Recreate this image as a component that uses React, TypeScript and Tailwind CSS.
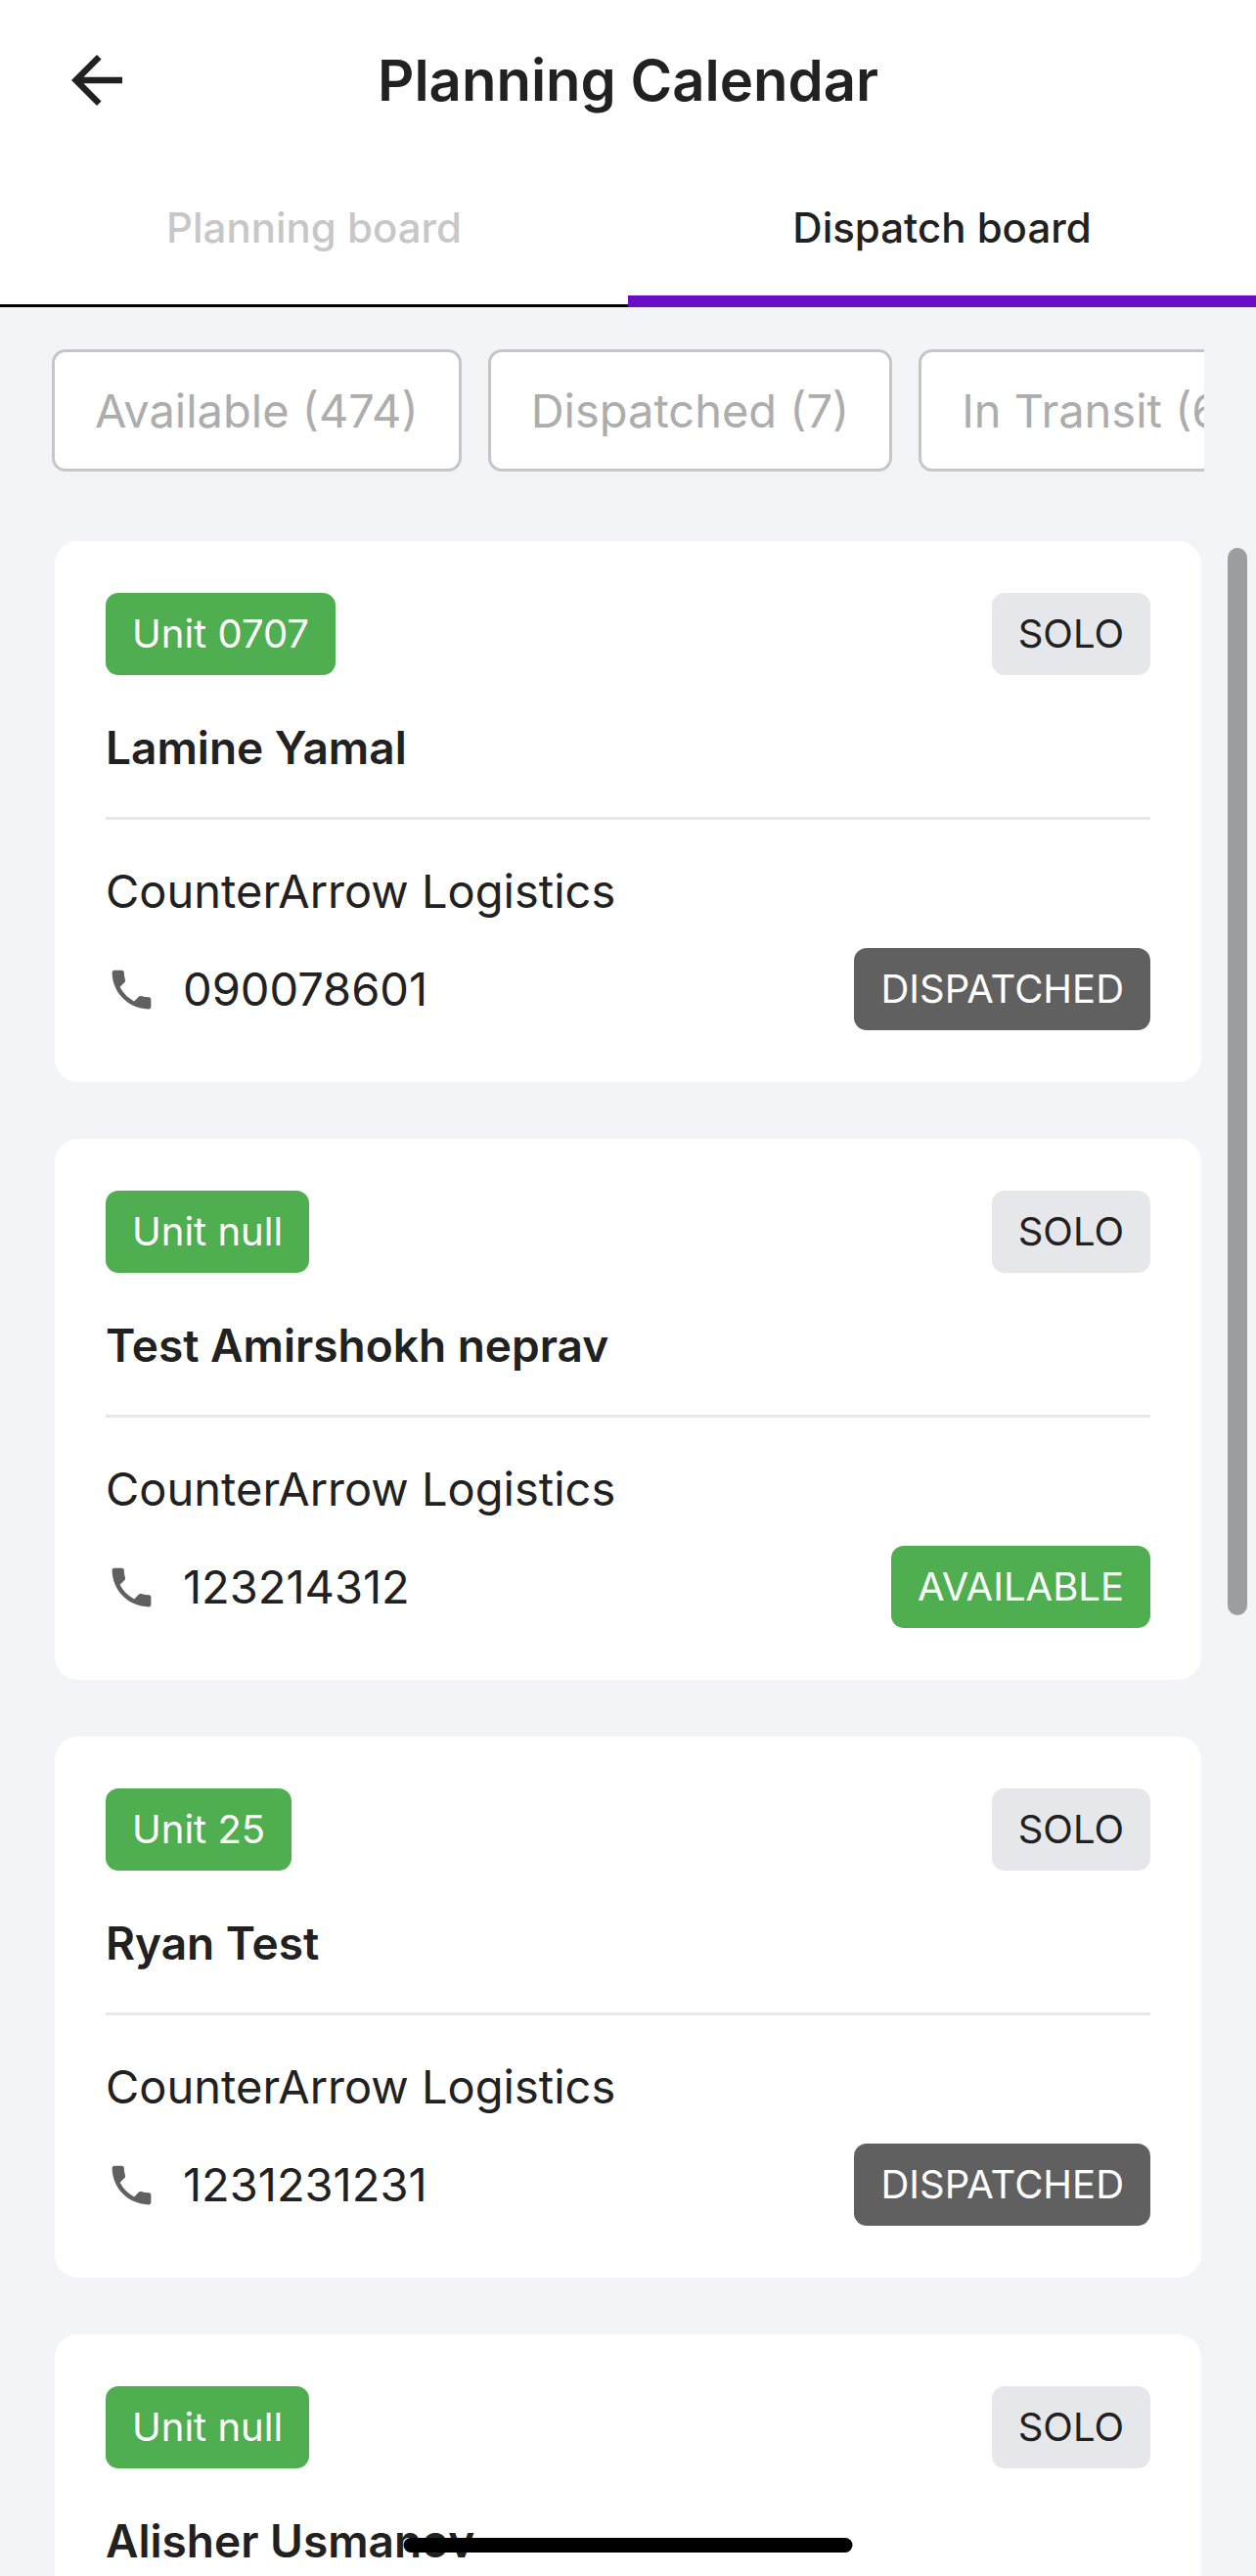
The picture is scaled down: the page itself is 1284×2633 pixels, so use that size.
import React, { useState } from 'react';
import clsx from 'clsx';
import { MdArrowBack, MdPhone } from 'react-icons/md';

type Status = 'AVAILABLE' | 'DISPATCHED';

interface Driver {
  id: number;
  unit: string;
  team: string;
  name: string;
  contact?: {
    company: string;
    phone: string;
    status: Status;
  };
}

const tabs = ['Planning board', 'Dispatch board'];

const filters = ['Available (474)', 'Dispatched (7)', 'In Transit (6)'];

const drivers: Driver[] = [
  {
    id: 1,
    unit: 'Unit 0707',
    team: 'SOLO',
    name: 'Lamine Yamal',
    contact: { company: 'CounterArrow Logistics', phone: '090078601', status: 'DISPATCHED' },
  },
  {
    id: 2,
    unit: 'Unit null',
    team: 'SOLO',
    name: 'Test Amirshokh neprav',
    contact: { company: 'CounterArrow Logistics', phone: '123214312', status: 'AVAILABLE' },
  },
  {
    id: 3,
    unit: 'Unit 25',
    team: 'SOLO',
    name: 'Ryan Test',
    contact: { company: 'CounterArrow Logistics', phone: '1231231231', status: 'DISPATCHED' },
  },
  { id: 4, unit: 'Unit null', team: 'SOLO', name: 'Alisher Usmanov' },
];

const badgeColors = {
  green: 'bg-[#4faf50] text-white',
  gray: 'bg-[#e6e7ea] text-[#212121]',
  dark: 'bg-[#606060] text-white',
};

const Badge = ({ color, children }: { color: keyof typeof badgeColors; children: React.ReactNode }) => (
  <span className={clsx('flex h-[84px] items-center rounded-[13px] px-[27px] text-[40px] leading-none', badgeColors[color])}>
    {children}
  </span>
);

const DriverCard = ({ driver }: { driver: Driver }) => (
  <article className="flex-shrink-0 rounded-3xl bg-white px-[52px] py-[53px]">
    <div className="flex items-center justify-between">
      <Badge color="green">{driver.unit}</Badge>
      <Badge color="gray">{driver.team}</Badge>
    </div>
    <h2 className="mt-[45px] text-[46px] font-semibold leading-[58px]">{driver.name}</h2>
    {driver.contact && (
      <>
        <hr className="mt-[42px] border-t-[3px] border-[#e7e7e7]" />
        <p className="mt-[43px] text-[47px] leading-[60px]">{driver.contact.company}</p>
        <div className="mt-[28px] flex items-center justify-between">
          <a href={`tel:${driver.contact.phone}`} className="flex items-center gap-[26px] text-[47px] leading-[60px]">
            <MdPhone size={53} className="text-[#606060]" />
            {driver.contact.phone}
          </a>
          <Badge color={driver.contact.status === 'AVAILABLE' ? 'green' : 'dark'}>{driver.contact.status}</Badge>
        </div>
      </>
    )}
  </article>
);

export default function App() {
  const [activeTab, setActiveTab] = useState('Dispatch board');

  return (
    <div className="relative flex h-screen flex-col overflow-hidden bg-[#f2f4f8] font-['Inter',sans-serif] text-[#212121]">
      <header className="bg-white">
        <div className="grid h-[164px] grid-cols-[1fr_auto_1fr] items-center px-[60px]">
          <button type="button" aria-label="Back" className="justify-self-start">
            <MdArrowBack size={78} />
          </button>
          <h1 className="text-[58px] font-semibold leading-none">Planning Calendar</h1>
        </div>

        <div role="tablist" className="flex h-[150px]">
          {tabs.map((tab) => (
            <button
              key={tab}
              type="button"
              role="tab"
              aria-selected={tab === activeTab}
              onClick={() => setActiveTab(tab)}
              className={clsx(
                'flex flex-1 items-start justify-center pt-[44px] text-[42px] font-medium leading-[50px]',
                tab === activeTab ? 'border-b-12 border-[#6a0dc4]' : 'border-b-3 border-black text-[#c7c7c7]'
              )}
            >
              {tab}
            </button>
          ))}
        </div>
      </header>

      <div className="mx-[53px] mt-[43px] flex flex-shrink-0 gap-[27px] overflow-x-auto [scrollbar-width:none]">
        {filters.map((filter) => (
          <button
            key={filter}
            type="button"
            className="h-[125px] flex-shrink-0 rounded-[14px] border-3 border-[#c5c6ca] bg-white px-[41px] text-[47px] leading-none text-[#adadad]"
          >
            {filter}
          </button>
        ))}
      </div>

      <main className="mt-[71px] flex min-h-0 flex-1 flex-col gap-[58px] overflow-y-auto px-[56px] [scrollbar-width:none]">
        {drivers.map((driver) => (
          <DriverCard key={driver.id} driver={driver} />
        ))}
      </main>

      {/* scroll thumb */}
      <div className="absolute right-[9px] top-[560px] h-[1091px] w-5 rounded-full bg-[#9c9d9f]"></div>

      {/* home indicator */}
      <div className="absolute bottom-6 left-1/2 h-[15px] w-[459px] -translate-x-1/2 rounded-full bg-black"></div>
    </div>
  );
}
